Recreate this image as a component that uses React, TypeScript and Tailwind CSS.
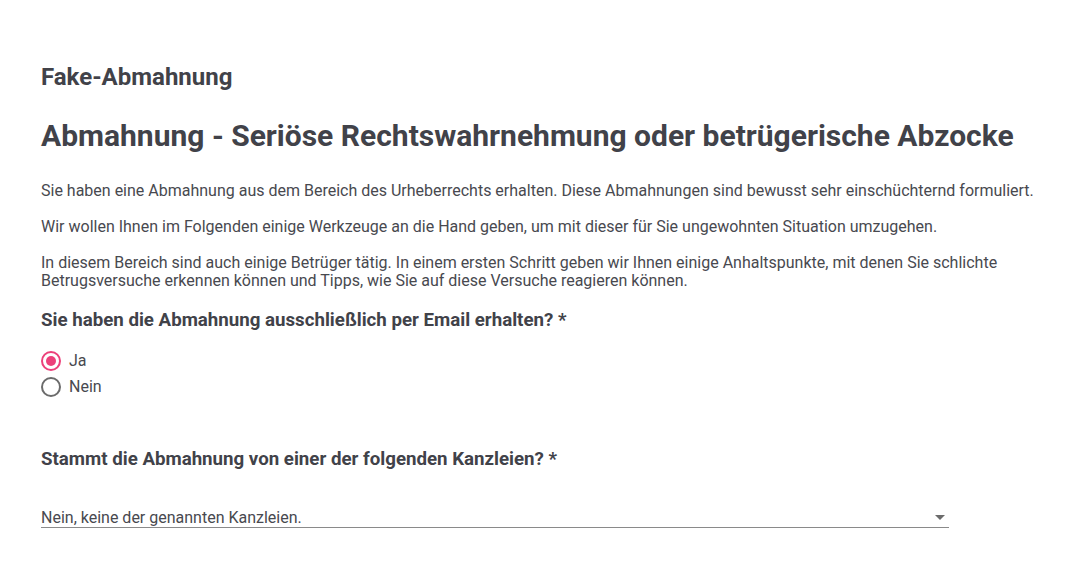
import React, { useState } from "react";

const options = [
    "Nein, keine der genannten Kanzleien.",
];

export default function App() {
    const [viaEmail, setViaEmail] = useState("ja");
    const [kanzlei, setKanzlei] = useState(options[0]);

    return (
        <div className="min-h-screen w-full bg-white font-['Roboto',sans-serif] text-[#414249]">
            <div className="px-[41px] pt-[62px]">
                <h3 className="text-[24px] font-bold leading-[30px]">Fake-Abmahnung</h3>
                <h1 className="mt-[26px] text-[30px] font-bold leading-[36px]">
                    Abmahnung - Seriöse Rechtswahrnehmung oder betrügerische Abzocke
                </h1>

                <div className="mt-[28px] flex flex-col gap-[18px] text-[16px] leading-[18px] text-[#48494f]">
                    <p>
                        Sie haben eine Abmahnung aus dem Bereich des Urheberrechts erhalten. Diese Abmahnungen sind bewusst sehr einschüchternd formuliert.
                    </p>
                    <p>
                        Wir wollen Ihnen im Folgenden einige Werkzeuge an die Hand geben, um mit dieser für Sie ungewohnten Situation umzugehen.
                    </p>
                    <p className="pr-[20px]">
                        In diesem Bereich sind auch einige Betrüger tätig. In einem ersten Schritt geben wir Ihnen einige Anhaltspunkte, mit denen Sie schlichte Betrugsversuche erkennen können und Tipps, wie Sie auf diese Versuche reagieren können.
                    </p>
                </div>

                <h4 className="mt-[18px] text-[18.7px] font-bold leading-[24px]">
                    Sie haben die Abmahnung ausschließlich per Email erhalten? *
                </h4>

                <div className="mt-[19px] flex flex-col gap-[6px]">
                    {[
                        { value: "ja", label: "Ja" },
                        { value: "nein", label: "Nein" },
                    ].map((o) => (
                        <label
                            key={o.value}
                            className="flex h-[20px] cursor-pointer items-center gap-[8px] text-[16px]"
                            onClick={() => setViaEmail(o.value)}
                        >
                            {viaEmail === o.value ? (
                                <span className="flex h-[20px] w-[20px] items-center justify-center rounded-full border-2 border-[#ec407a]">
                                    <span className="h-[10px] w-[10px] rounded-full bg-[#ec407a]" />
                                </span>
                            ) : (
                                <span className="h-[20px] w-[20px] rounded-full border-2 border-[#6b6b6b]" />
                            )}
                            <span className="text-[#48494f]">{o.label}</span>
                        </label>
                    ))}
                </div>

                <h4 className="mt-[50px] text-[18.7px] font-bold leading-[24px]">
                    Stammt die Abmahnung von einer der folgenden Kanzleien? *
                </h4>

                <div className="relative mt-[39px] w-[908px] border-b border-[#8a8a8a] pb-[1px]">
                    <select
                        value={kanzlei}
                        onChange={(e) => setKanzlei(e.target.value)}
                        className="block h-[16px] w-full appearance-none bg-transparent p-0 text-[16px] leading-[16px] text-[#48494f] outline-none"
                    >
                        {options.map((o) => (
                            <option key={o}>{o}</option>
                        ))}
                    </select>
                    <span className="pointer-events-none absolute right-[4px] top-[5px] h-0 w-0 border-x-[5px] border-t-[5px] border-x-transparent border-t-[#6b6b6b]" />
                </div>
            </div>
        </div>
    );
}
